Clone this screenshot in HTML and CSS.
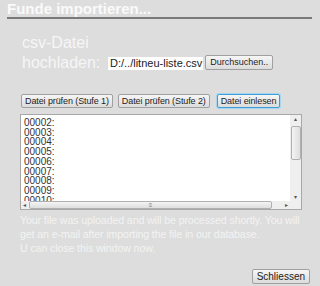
FILE: index.html
```html
<!DOCTYPE html>
<html lang="de">
<head>
    <meta charset="UTF-8">
    <title>Funde importieren</title>
    <link rel="stylesheet" href="styles.css">
</head>
<body>
    <div class="dialog">
        <h1 class="title">Funde importieren...</h1>
        <div class="upload">
            <label class="upload-label">csv-Datei<br>hochladen:</label>
            <div class="file">
                <span class="file-name">D:/../litneu-liste.csv</span>
                <button class="btn">Durchsuchen..</button>
            </div>
        </div>
        <div class="actions">
            <button class="btn">Datei prüfen (Stufe 1)</button>
            <button class="btn">Datei prüfen (Stufe 2)</button>
            <button class="btn btn-focus">Datei einlesen</button>
        </div>
        <div class="log">
            <div class="log-text">
                00002:<br>00003:<br>00004:<br>00005:<br>00006:<br>00007:<br>00008:<br>00009:<br>00010:
            </div>
            <div class="vscroll">
                <span class="arrow">&#9652;</span>
                <span class="vthumb"></span>
                <span class="arrow arrow-down">&#9662;</span>
            </div>
            <div class="hscroll">
                <span class="arrow">&#9666;</span>
                <span class="hthumb">&#8801;</span>
                <span class="arrow">&#9656;</span>
            </div>
            <div class="corner"></div>
        </div>
        <p class="note">Your file was uploaded and will be processed shortly. You will get an e-mail after importing the file in our database.<br>U can close this window now.</p>
        <div class="footer">
            <button class="btn">Schliessen</button>
        </div>
    </div>
</body>
</html>
```

FILE: styles.css
```css
body {
    margin: 0;
    background-color: #dddddd;
    font-family: "Liberation Sans", Arial, sans-serif;
}

.dialog {
    width: 320px;
    height: 286px;
    padding: 0 8px 0 7px;
    box-sizing: border-box;
    overflow: hidden;
}

.title {
    margin: 0;
    font-size: 15px;
    line-height: 17px;
    color: #fafafa;
    border-bottom: 2px solid #7a7a7a;
}

.upload {
    display: flex;
    align-items: flex-end;
    margin: 14px 0 0 15px;
}

.upload-label {
    font-size: 16px;
    line-height: 20px;
    color: #f6f6f6;
    width: 86px;
}

.file {
    display: flex;
    align-items: center;
    margin-bottom: 3px;
}

.file-name {
    background: white;
    font-size: 11px;
    line-height: 13px;
    padding: 0 1px 0 2px;
    color: #222;
}

.btn {
    font-family: "Liberation Sans", Arial, sans-serif;
    font-size: 9px;
    line-height: 11px;
    color: #222;
    padding: 1px 3px;
    white-space: nowrap;
    background: linear-gradient(#f6f6f6, #dcdcdc);
    border: 1px solid #a0a0a0;
    border-radius: 2px;
    margin: 0;
}

.file .btn {
    margin-left: 2px;
    margin-top: -3px;
    padding: 1px 4px;
}

.actions {
    display: flex;
    gap: 5px;
    margin: 21px 0 0 14px;
}

.actions .btn {
    font-size: 9px;
    line-height: 10px;
    padding: 1px 3px;
    letter-spacing: -0.1px;
}

.actions .btn-focus {
    margin-left: 2px;
    border-color: #3c9fd6;
    box-shadow: 0 0 0 1px #a7d4ee;
}

.log {
    display: grid;
    grid-template-columns: 269px 11px;
    grid-template-rows: 86px 8px;
    margin: 6px 0 0 13px;
    width: 280px;
    border: 1px solid #a8a8a8;
    background: white;
}

.log-text {
    padding: 3px 0 0 3px;
    font-size: 10px;
    line-height: 9.7px;
    color: #333;
    overflow: hidden;
}

.vscroll {
    display: flex;
    flex-direction: column;
    align-items: center;
    background: #efefef;
}

.vthumb {
    width: 8px;
    height: 32px;
    margin-top: 3px;
    border: 1px solid #b0b0b0;
    border-radius: 2px;
    background: linear-gradient(90deg, #f4f4f4, #dedede);
}

.arrow {
    font-size: 6px;
    line-height: 8px;
    color: #555;
}

.arrow-down {
    margin-top: auto;
}

.hscroll {
    display: flex;
    align-items: center;
    gap: 3px;
    padding: 0 2px;
    background: #efefef;
}

.hthumb {
    flex: 1;
    height: 6px;
    margin-right: 10px;
    border: 1px solid #b0b0b0;
    border-radius: 2px;
    background: linear-gradient(#f4f4f4, #dedede);
    font-size: 6px;
    line-height: 6px;
    text-align: center;
    color: #777;
}

.corner {
    background: #efefef;
}

.note {
    width: 282px;
    margin: 3px 0 0 13px;
    font-size: 10.6px;
    letter-spacing: -0.1px;
    line-height: 14px;
    color: #f3f3f3;
}

.footer {
    display: flex;
    justify-content: flex-end;
    margin-top: 14px;
    padding-right: 2px;
}

.footer .btn {
    font-size: 10px;
    line-height: 11px;
    padding: 1px 4px;
}
```
